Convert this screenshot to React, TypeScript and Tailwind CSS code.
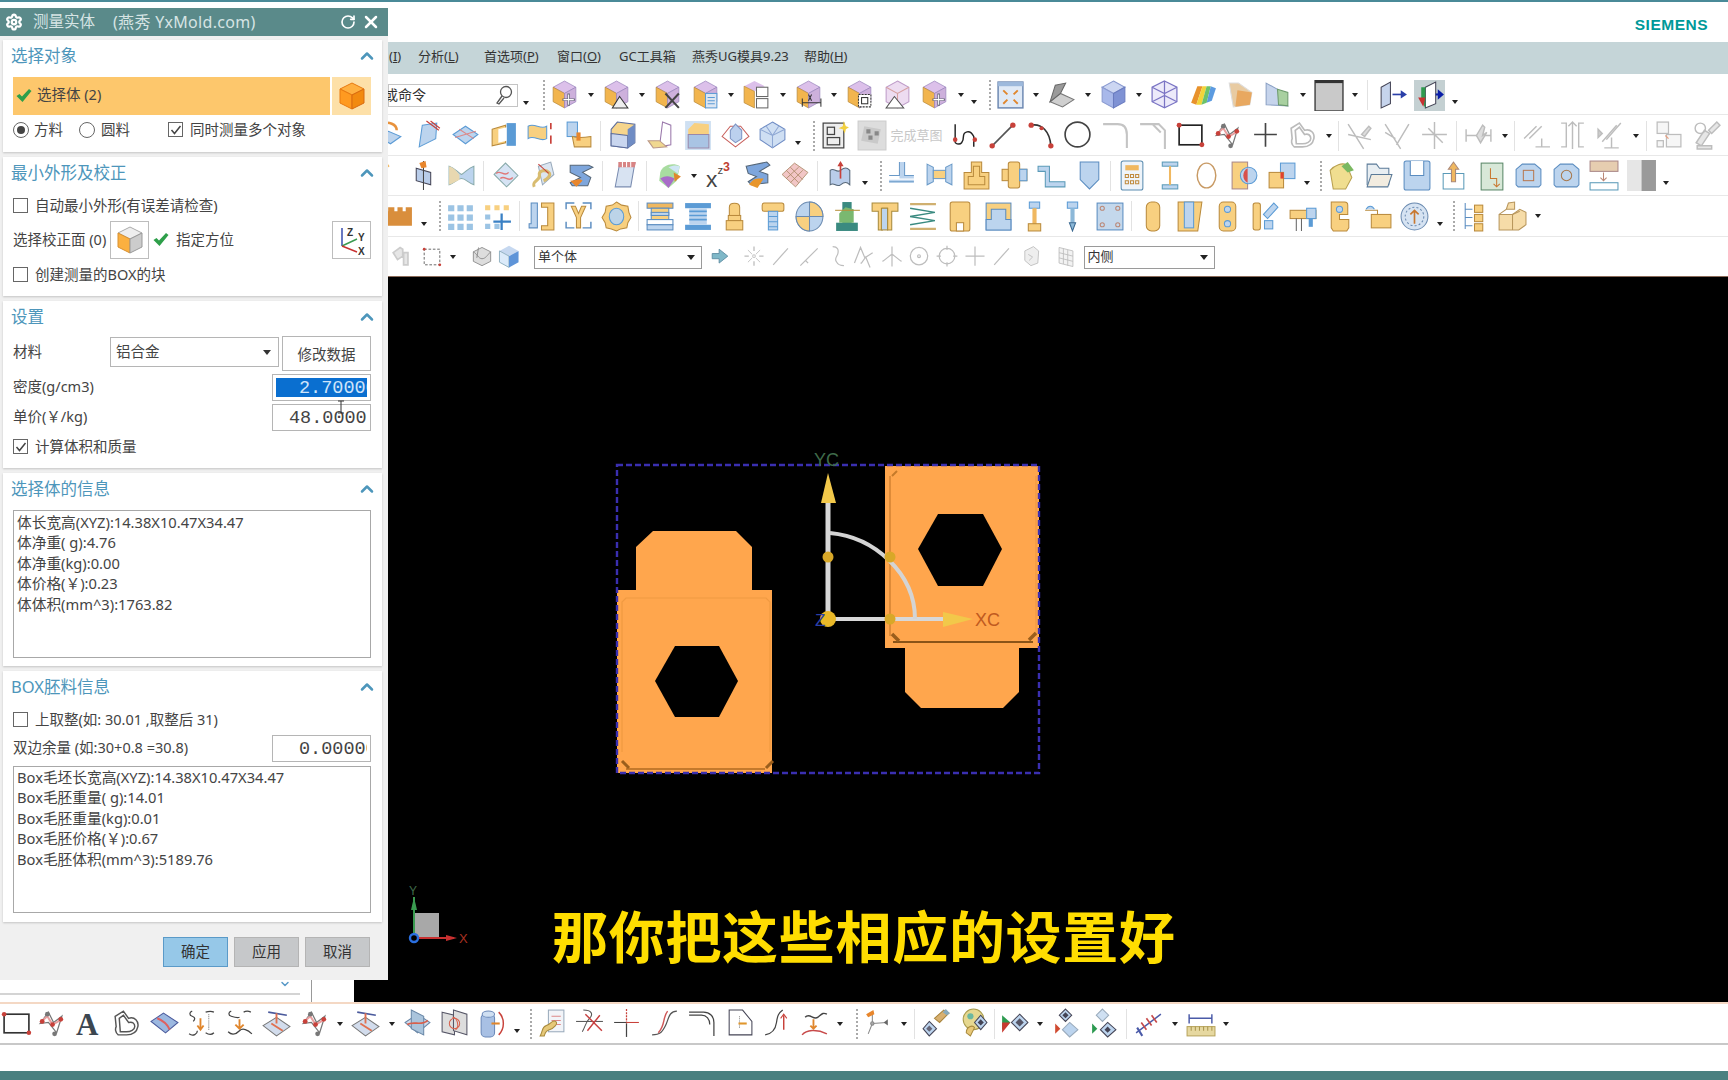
import React from 'react';
import { ChevronDown, ChevronUp, RotateCw, Settings, X } from 'lucide-react';

const FONT = "font-['Noto_Sans','Noto_Sans_CJK_SC',sans-serif]";

const B = '#5b9bd5';
const LB = '#bcd4ee';
const O = '#f0b860';
const LO = '#f8d080';
const G = '#bdbdbd';
const R = '#c8413a';

// faceted cube used by the first toolbar group
const PCube = ({ children }: { children?: React.ReactNode }) => (
  <g>
    <polygon points="14,1 25,7 14,13 3,7" fill="#dcc0ea" stroke="#9a86bc" strokeWidth=".7" />
    <polygon points="3,7 14,13 14,27 3,21" fill="#f2b54e" stroke="#b98a3c" strokeWidth=".7" />
    <polygon points="14,13 25,7 25,21 14,27" fill="#cdb0dc" stroke="#9a86bc" strokeWidth=".7" />
    {children}
  </g>
);

const Mold = ({ children }: { children: React.ReactNode }) => (
  <g stroke="#6a9ac8" strokeWidth="1">{children}</g>
);

const icons: Record<string, React.ReactNode> = {
  cmove: <PCube><path d="M18 13v12M12 19h12" stroke="#667" strokeWidth="2.4" /><path d="M18 14v10M13 19h10" stroke="#fff" strokeWidth="1" /></PCube>,
  ctri: <PCube><polygon points="17,16 25,27 10,27" fill="#eee" stroke="#333" /></PCube>,
  cx: <PCube><path d="M12 13l13 14M25 13L12 27" stroke="#444" strokeWidth="2" /></PCube>,
  cdoc: <PCube><rect x="14" y="13" width="11" height="14" fill="#dde6f2" stroke={B} /><path d="M16 17h7M16 20h7M16 23h7" stroke={B} /></PCube>,
  csplit: <g><polygon points="12,1 22,6 12,11 2,6" fill="#dcc0ea" /><polygon points="2,6 12,11 12,27 2,22" fill="#f2b54e" stroke="#b98a3c" strokeWidth=".7" /><rect x="14" y="7" width="11" height="9" fill="#fff" stroke="#666" /><rect x="14" y="18" width="11" height="9" fill="#fff" stroke="#666" /></g>,
  cdim: <PCube><path d="M8 22h18M8 18v8M26 18v8" stroke="#333" /><path d="M17 14l-3 6M14 14l3 6" stroke="#333" /></PCube>,
  cframe: <PCube><rect x="13" y="14" width="12" height="12" fill="#fff" stroke="#333" strokeDasharray="2 1" /><rect x="16" y="17" width="6" height="6" fill="none" stroke="#333" /></PCube>,
  cghost: <g opacity=".85"><polygon points="14,1 25,7 25,21 14,27 3,21 3,7" fill="#ead6ef" stroke="#b48cc0" /><path d="M14 13v14M3 7l11 6 11-6" stroke="#d09090" fill="none" /><polygon points="11,16 20,27 3,27" fill="#fff" stroke="#333" /></g>,
  fit: <g><rect x="2" y="2" width="24" height="25" fill="#dfe9f6" stroke="#6a86b0" strokeWidth="1.4" /><rect x="2" y="2" width="24" height="4" fill="#9db9dc" /><path d="M7 10l4 4M21 10l-4 4M7 23l4-4M21 23l-4-4" stroke="#e0862c" strokeWidth="1.8" /></g>,
  scan: <g><polygon points="3,21 15,26 26,19 13,13" fill="#cfcfcf" stroke="#777" /><polygon points="3,21 8,5 18,3 13,13" fill="#9a9a9a" stroke="#666" /></g>,
  blue: <g><polygon points="14,1 25,7 14,13 3,7" fill="#ccd6f2" stroke="#8a9ad0" /><polygon points="3,7 14,13 14,27 3,21" fill="#a8b8ea" stroke="#8a9ad0" /><polygon points="14,13 25,7 25,21 14,27" fill="#7f92d4" stroke="#6a7cc0" /></g>,
  wire: <g fill="none" stroke="#7a74c4" strokeWidth="1.2"><polygon points="14,1 26,7 26,21 14,27 2,21 2,7" fill="#eceafa" /><path d="M2 7l12 6 12-6M14 13v14M14 1v14M2 21l12-6 12 6" /></g>,
  rainbow: <g><polygon points="3,22 9,6 14,6 8,24" fill="#e8922c" /><polygon points="8,24 14,6 18,6 13,24" fill="#f2d43a" /><polygon points="13,24 18,6 22,6 18,22" fill="#6cc26a" /><polygon points="18,22 22,6 27,8 23,20" fill="#5c9be0" /></g>,
  ofold: <g><polygon points="4,3 13,3 26,12 24,24 8,26" fill="#e8cba2" stroke="#ddd" /><polygon points="12,10 26,12 24,24 10,26" fill="#e8a860" /></g>,
  bgbox: <g><polygon points="3,3 14,9 24,25 3,24" fill="#c6d4ec" stroke="#8aa0c4" /><polygon points="14,9 24,12 24,25 15,24" fill="#a8d0a0" stroke="#6c9a6c" /></g>,
  gray: <g><rect x="1" y="0" width="27" height="30" fill="#c9c9c9" stroke="#444" strokeWidth="1.4" /><rect x="1" y="0" width="27" height="3" fill="#333" /></g>,
  pane: <g><polygon points="3,7 12,2 12,23 3,27" fill="#c6d4ec" stroke="#445" /><path d="M14 14h10" stroke="#2a3fa8" strokeWidth="1.6" /><polygon points="22,10 28,14 22,18" fill="#2a3fa8" /></g>,
  paneh: <g><rect x="-2" y="-1" width="32" height="32" fill="#c4d0d2" /><polygon points="10,7 20,2 20,23 10,27" fill="#fff" stroke="#445" /><polygon points="6,7 10,7 10,27 6,20" fill="#2f9a4e" /><polygon points="3,17 10,17 8,26" fill="#c83030" /><path d="M20 14h5" stroke="#0a1fa8" strokeWidth="2" /><polygon points="22,9 28,14 22,19" fill="#0a1fa8" /></g>,

  twist: <g><polygon points="2,16 12,11 24,16 14,23" fill={LB} stroke={B} /><path d="M6 4c6-3 14 0 14 6" stroke="#e8923c" strokeWidth="2.4" fill="none" /></g>,
  sflag: <g><polygon points="8,5 22,3 21,18 5,26" fill={LB} stroke={B} /><path d="M12 1l12 9M16 1l9 7" stroke={R} strokeWidth="1.2" /></g>,
  disc: <g><polygon points="2,14 14,6 26,14 14,23" fill={LB} stroke={B} /><path d="M4 17l20-6M8 9l14 9" stroke="#d88" /></g>,
  ublock: <g><polygon points="3,9 16,5 16,22 3,25" fill={LO} stroke="#b98a3c" /><rect x="17" y="3" width="9" height="22" fill={B} /><polygon points="9,9 17,7 17,20 9,22" fill="#fff" /></g>,
  wave: <g><path d="M2 6c6-4 12 4 18 0v12c-6 4-12-4-18 0z" fill={LO} stroke={B} /><path d="M24 3v6M24 15v8" stroke={R} strokeWidth="1.6" /></g>,
  two: <g><rect x="3" y="2" width="10" height="14" fill={LB} stroke={B} /><path d="M8 16c6 2 18 0 18 0v10H10z" fill={LO} stroke="#b98a3c" /><rect x="12" y="12" width="4" height="8" fill="#e8862c" /></g>,
  boxo: <g><polygon points="3,9 9,2 26,4 26,22 19,27 3,25" fill="#f6d58c" stroke="#5b6c9c" /><polygon points="3,13 19,15 19,27 3,25" fill="#c9d6ef" stroke="#5b6c9c" /><polygon points="19,9 26,4 26,22 19,27" fill="#6f8cc4" /></g>,
  bend: <g><polygon points="16,2 24,5 24,24 13,26" fill="#fff" stroke="#97a" /><polygon points="2,20 13,20 20,26 7,27" fill="#f0d890" stroke="#b98" /></g>,
  shade: <g><rect x="2" y="1" width="25" height="28" fill="#cfe0f2" /><polygon points="5,9 11,3 25,4 25,14 5,14" fill={LO} /><polygon points="5,14 25,14 25,27 5,27" fill="#a9c4e4" stroke="#98a" /></g>,
  pyr: <g fill="none" stroke="#c8605c"><polygon points="1,16 9,6 19,6 27,16 14,26" /><polygon points="9,10 14,4 20,10 20,18 14,22 9,18" fill="#bcd0ee" stroke="#7d95c4" /></g>,
  gem: <g><polygon points="14,2 26,9 26,19 14,27 2,19 2,9" fill="#cfdff3" stroke="#6f8cc4" /><path d="M2 9l12 6 12-6M14 15v12M8 6l6 9 6-9" stroke="#8fa8d4" fill="none" /></g>,
  sknew: <g fill="#eee" stroke="#444" strokeWidth="1.2"><rect x="3" y="3" width="20" height="24" /><rect x="7" y="7" width="7" height="7" /><rect x="7" y="17" width="12" height="7" /><polygon points="23,1 25,6 28,7 25,9 24,13 22,9 18,8 22,6" fill="#f2d040" stroke="none" /></g>,
  flag: <g><rect x="1" y="1" width="27" height="28" fill="#ddd" stroke="#ccc" /><path d="M7 6l16 3-3 14-16-3z" fill="#c9c9c9" /><path d="M9 9h4v4H9zM17 11h4v4h-4zM11 15h4v4h-4z" fill="#888" /></g>,
  crv: <g fill="none"><path d="M4 4v18M4 22c6 4 8-2 8-6s6-8 10 0v10" stroke="#222" strokeWidth="1.4" /><circle cx="4" cy="19" r="2.2" fill={R} /><circle cx="23" cy="19" r="2.2" fill={R} /></g>,
  line: <g><path d="M4 25L24 5" stroke="#555" strokeWidth="1.6" /><circle cx="4" cy="25" r="2.6" fill={R} /><circle cx="24" cy="5" r="2.6" fill={R} /></g>,
  arc: <g><path d="M5 5c10-2 18 6 19 20" stroke="#333" strokeWidth="1.6" fill="none" /><circle cx="5" cy="5" r="2.6" fill={R} /><circle cx="24" cy="25" r="2.6" fill={R} /><circle cx="15" cy="8" r="2" fill={R} /></g>,
  circle: <circle cx="14" cy="14" r="12" fill="none" stroke="#444" strokeWidth="1.6" />,
  fillet: <path d="M2 4h14c6 0 9 4 9 10v13" fill="none" stroke="#c4c4c4" strokeWidth="2" />,
  chamfer: <path d="M2 4h18l6 6v18M14 4l8 8" fill="none" stroke="#c4c4c4" strokeWidth="2" />,
  rect: <g><rect x="3" y="5" width="22" height="19" fill="none" stroke="#222" strokeWidth="1.6" /><circle cx="3" cy="5" r="2.4" fill={R} /><circle cx="25" cy="24" r="2.4" fill={R} /></g>,
  poly: <g><path d="M3 15l8-11 5 10 8-6-5 16-8-10z" fill="none" stroke="#777" strokeWidth="1.2" /><path d="M3 14l7-6 5 8 9-5" fill="none" stroke="#e8a0a0" strokeWidth="2" /><circle cx="10" cy="6" r="2.3" fill="#777" /><circle cx="5" cy="13" r="2.3" fill={R} /><circle cx="15" cy="16" r="2.3" fill={R} /><circle cx="23" cy="11" r="2.3" fill={R} /><circle cx="17" cy="25" r="2.3" fill="#777" /></g>,
  plus: <path d="M14 3v23M3 14h22" stroke="#444" strokeWidth="1.6" />,
  heart: <g fill="#fff" stroke="#bbb" strokeWidth="1.6"><path d="M3 8l8-5 5 7c6-2 10 3 9 8s-5 8-11 8H6c-3-2-3-6-2-8z" /><path d="M7 10l4-3 5 7c4-1 6 1 6 4s-4 5-8 5H8z" /></g>,
  heartc: <g fill="#fff" stroke="#555" strokeWidth="1.4"><path d="M3 8l8-5 5 7c6-2 10 3 9 8s-5 8-11 8H6c-3-2-3-6-2-8z" /><path d="M7 10l4-3 5 7c4-1 6 1 6 4s-4 5-8 5H8z" /></g>,
  trim: <g stroke={G} strokeWidth="1.4" fill="none"><path d="M3 4l15 24M3 14l22 5" /><path d="M16 14l7-8 2 2-6 8z" fill="#ddd" /></g>,
  trim2: <g stroke={G} strokeWidth="1.4" fill="none"><path d="M3 4l15 24M26 4L14 24M3 12l10 6" /></g>,
  trim3: <g stroke={G} strokeWidth="1.4" fill="none"><path d="M14 2v26M2 14h24M8 8l14 14" /></g>,
  gdim: <g stroke={G} strokeWidth="1.4" fill="none"><path d="M2 9v12M26 9v12M2 15h24" /><path d="M12 15l6-10 2 2-2 8 4-3-6 10z" fill="#ddd" /></g>,
  par: <g stroke={G} strokeWidth="1.4"><path d="M3 18L15 6M8 18L20 6M14 26h14M20 26v-8" /></g>,
  perp: <g stroke={G} strokeWidth="1.4" fill="none"><path d="M3 3h5v23H3M25 3h-5v23h5M14 2v26M10 6l4-4 4 4" /></g>,
  sym: <g stroke={G} strokeWidth="1.4" fill="none"><path d="M10 19L24 3M6 21L20 5M8 27h14M15 27V17" /><polygon points="2,9 6,13 2,17" fill="#ccc" /></g>,
  grid: <g stroke={G} strokeWidth="1.2" fill="#f6f6f6"><rect x="3" y="2" width="11" height="11" /><rect x="12" y="14" width="14" height="12" /><rect x="3" y="20" width="6" height="6" /><path d="M11 15l3 3" stroke="#e8a080" /></g>,
  gears: <g stroke={G} strokeWidth="1.4" fill="#e6e6e6"><path d="M4 22l8-12 5 3-8 12z" /><circle cx="8" cy="8" r="5" fill="none" /><path d="M16 10l8-8 3 3-8 8zM5 25h14v3H5z" /></g>,

  partial: <g><polygon points="3,10 14,2 17,6 6,14" fill={O} /><polygon points="4,18 14,16 12,26 4,24" fill={B} /></g>,
  twist2: <g><polygon points="6,8 20,12 20,24 6,20" fill="#b9cdea" stroke="#445" /><path d="M13 1v28" stroke="#444" /><polygon points="9,3 15,1 16,7 11,8" fill="#e8862c" /></g>,
  bow: <g><path d="M2 6c6 2 8 6 12 8 4-2 6-6 12-8v18c-6-2-8-6-12-6-4 0-6 4-12 6z" fill={LB} stroke="#8aa" /><path d="M2 6c6 2 8 6 10 8v5c-2 1-6 3-10 5z" fill="#e8d8b0" /></g>,
  wavy: <g fill="none" stroke="#8aa" strokeWidth="1"><path d="M3 14L14 3l12 12-11 11z" fill="#d6e3f4" /><path d="M5 13c4-4 8 4 12-1M9 18c4-4 8 4 12-1" stroke="#e07878" strokeWidth="1.4" /></g>,
  ysnake: <g><polygon points="10,6 22,2 25,14 14,24" fill="#dce6f2" stroke="#9ab" /><path d="M6 26c-3-6 6-6 5-11s6-6 9-3-2 7-5 8" fill="none" stroke="#d8bc70" strokeWidth="3" /><path d="M10 4l10 9" stroke={R} /></g>,
  sarrow: <g><path d="M4 5h18l4 2-10 5 8 5-3 8H6l-2-3 10-5-10-5z" fill="#7ea6dc" stroke="#567" /><path d="M4 20c6 0 8-3 12 0l-6 6z" fill="#e8862c" /></g>,
  ribbon: <g><polygon points="9,5 24,3 20,26 5,26" fill="#d8e3f2" stroke="#7a8cb0" /><path d="M8 2h17l-1 5H8z" fill="#d88484" /><path d="M12 2v5M16 2v5M20 2v5" stroke="#fff" /></g>,
  shell: <g><path d="M6 12c2-7 12-10 19-6l-3 14-8 7-9-7z" fill="#a8dca0" /><path d="M6 18c6-4 10-2 14 0l-6 9z" fill="#a86cc8" /><path d="M14 7c4-2 8-2 11-1l-2 7z" fill="#cfe6f4" /><polygon points="19,12 26,16 20,21" fill="#e0862c" /></g>,
  xz3: <text x="1" y="26" fontFamily="Liberation Sans" fontSize="22" fill="#444">x<tspan fontSize="11" dy="-12" fill="#444">z</tspan><tspan fontSize="12" dy="-3" fill="#c04030" fontWeight="bold">3</tspan></text>,
  sorange: <g><path d="M3 6l20-4 3 3-10 6 8 3v8l-16 2-3-3 8-5-8-3z" fill="#7ea6dc" stroke="#567" /><path d="M6 24c4-7 8-6 14-6l-6 9z" fill="#e8962c" /></g>,
  mesh: <g stroke="#a86" strokeWidth=".8"><polygon points="2,14 14,3 27,12 15,26" fill="#f2c6c6" /><path d="M6 10l12 12M10 7l12 12M6 18l12-11M10 22l12-12" /></g>,
  upflag: <g><path d="M4 10c4-3 6 3 10 0s6-3 9 0v14c-3-3-5-3-9 0s-6-3-10 0z" fill="#b9cdea" stroke="#567" /><path d="M14 18V3" stroke={R} strokeWidth="1.6" /><polygon points="11,6 14,1 17,6" fill={R} /></g>,
  tee: <Mold><path d="M12 2h5v13h9v3H12zM2 19h24v3H2z" fill={LB} stroke="none" /><path d="M12 2v13H2M17 2v13h9M2 21h24" fill="none" /></Mold>,
  hbar: <Mold><polygon points="2,4 8,7 8,21 2,24" fill={LB} /><rect x="8" y="10" width="12" height="8" fill={LO} /><polygon points="26,4 20,7 20,21 26,24" fill={LB} /></Mold>,
  ubrk: <path d="M9 2h10v10h7v16H2V12h7zM6 16h5V6h6v10h5v8H6z" fill={LO} stroke="#b98a3c" />,
  cross: <g stroke="#b98a3c"><rect x="2" y="9" width="24" height="11" fill={LO} /><rect x="8" y="2" width="11" height="25" rx="2" fill={LO} /><path d="M19 9h7v11h-7z" fill={LB} stroke={B} /></g>,
  zig: <path d="M1 6h11v15h15v5H8V11H1z" fill={LB} stroke="#5a9ab8" />,
  drop: <polygon points="5,2 23,2 23,19 14,28 5,19" fill={LB} stroke="#5a8cc0" />,
  calc: <g><rect x="4" y="1" width="21" height="28" rx="2" fill="#eef4fa" stroke="#5a8cb0" /><rect x="8" y="5" width="13" height="5" fill={O} /><path d="M8 14h3v3H8zM13 14h3v3h-3zM18 14h3v3h-3zM8 20h3v3H8zM13 20h3v3h-3zM18 20h3v3h-3z" fill="none" stroke="#c08a3c" /></g>,
  ibeam: <g fill={LB} stroke="#5a9ab8"><rect x="7" y="2" width="15" height="4" /><rect x="7" y="24" width="15" height="4" /><rect x="13.5" y="6" width="2" height="18" fill={O} stroke="none" /></g>,
  ring: <ellipse cx="14" cy="15" rx="9" ry="12" fill="#fff" stroke="#c89a64" strokeWidth="1.4" />,
  halfc: <g><rect x="2" y="2" width="15" height="26" fill={LO} stroke="#a88" /><circle cx="18" cy="15" r="8" fill={LB} stroke={B} /><path d="M17 8a8 8 0 0 0 0 14z" fill="#d8504c" /></g>,
  sq2: <g><rect x="13" y="3" width="14" height="15" fill={LB} stroke={B} /><rect x="2" y="12" width="14" height="15" fill={LO} stroke="#b98a3c" /><rect x="13" y="12" width="3" height="6" fill="#e04030" /></g>,
  openf: <g><path d="M3 10c4-5 12-8 16-5l5 12-6 11H6z" fill="#f0de90" stroke="#b8a050" /><path d="M14 6l6-4 6 8-6 2z" fill="#7ab860" /></g>,
  folder: <g><path d="M3 8V4h9l3 4h9v16H3z" fill="#e8eef2" stroke="#5a7a98" /><path d="M3 26l4-12h20l-4 12z" fill="#f2ece0" stroke="#5a7a98" /></g>,
  save: <g><rect x="2" y="1" width="25" height="28" rx="2" fill={LB} stroke="#5a8cc0" /><path d="M8 1v14h13V1" fill="#fff" stroke="#5a8cc0" /></g>,
  upf: <g fill="#fff" stroke="#5a9ab8"><path d="M4 13h20v15H4z" /><path d="M14 2l-5 7h3v12h4V9h3z" fill={O} stroke="#a87" /></g>,
  gbox: <g><rect x="4" y="3" width="21" height="26" fill="#d8e8d8" stroke="#5a8868" /><path d="M13 8v10h6v8M16 23l3 3 3-3" fill="none" stroke="#c87830" /></g>,
  cam1: <g><path d="M2 9l6-5h12l6 5v15l-2 2H4l-2-2z" fill={LB} stroke="#5a8cc0" /><rect x="9" y="10" width="10" height="10" fill="none" stroke="#b87850" /></g>,
  cam2: <g><path d="M2 9l6-5h12l6 5v15l-2 2H4l-2-2z" fill={LB} stroke="#5a8cc0" /><circle cx="14" cy="15" r="5" fill="none" stroke="#a8784c" /></g>,
  slot: <g><rect x="1" y="1" width="27" height="10" fill="#e6cdb0" stroke="#a88" /><rect x="1" y="22" width="27" height="7" fill="#fff" stroke="#5a9ab8" /><path d="M14 12v8M11 17l3 3 3-3" stroke="#b87" fill="none" /></g>,
  grayb: <g><rect x="0" y="0" width="14" height="30" fill="#e6e6e6" /><rect x="14" y="0" width="14" height="30" fill="#9a9a9a" /></g>,

  wall: <path d="M0 10h4V6h6v4h3V6h5v4h3V6h6v18H0z" fill="#d98e3c" />,
  dots: <path d="M2 4h6v6H2zM11 4h6v6h-6zM20 4h6v6h-6z M2 13h6v6H2zM11 13h6v6h-6zM20 13h6v6h-6zM2 22h6v6H2zM11 22h6v6h-6zM20 22h6v6h-6z" fill="#9cc4e4" />,
  dotsm: <g><path d="M2 4h5v5H2zM11 4h5v5h-5zM20 4h5v5h-5z" fill={LO} /><path d="M2 13h5v5H2zM2 22h5v5H2zM11 22h5v5h-5z" fill="#9cc4e4" /><path d="M18 12v16M10 20h17" stroke="#3a80c4" strokeWidth="2.2" /></g>,
  bracket: <g><path d="M4 2h6v24H2v-4h2z" fill={LB} stroke="#5a8cc0" /><path d="M14 2h12v26H14v-4h6V6h-6z" fill={LO} stroke="#b98a3c" /></g>,
  ybr: <g><path d="M2 8V2h8M18 2h8v6M2 20v6h8M18 26h8v-6" fill="none" stroke="#5a8cc0" strokeWidth="1.4" /><path d="M7 5h4l3 7 3-7h4l-5 11v10h-4V16z" fill={LO} stroke="#b98a3c" /></g>,
  flower: <g><path d="M14 1l5 3 6 1 1 6 2 5-3 5-1 5-6 1-4 2-5-2-5-1-1-5-3-5 3-5 1-6 6-1z" fill={LO} stroke="#b98a3c" /><ellipse cx="14" cy="15" rx="7" ry="8" fill="#bcd4e8" stroke={B} /></g>,
  mold: <g stroke="#5a8cc0"><rect x="2" y="2" width="25" height="5" fill={O} /><rect x="6" y="7" width="17" height="11" fill={LO} /><rect x="6" y="11" width="17" height="3" fill={LB} /><rect x="2" y="18" width="25" height="5" fill="#fff" /><rect x="2" y="23" width="25" height="5" fill={LB} /></g>,
  coil: <g><rect x="2" y="2" width="25" height="5" fill={B} /><rect x="2" y="23" width="25" height="5" fill={B} /><path d="M6 7h17v16H6z" fill={LB} /><path d="M6 10h17M6 14h17M6 18h17" stroke={B} strokeWidth="1.6" /></g>,
  pin1: <g fill={LO} stroke="#b98a3c"><path d="M9 14V6c0-5 10-5 10 0v8z" /><rect x="8" y="14" width="12" height="5" /><rect x="6" y="19" width="16" height="9" /></g>,
  bolt: <g><rect x="4" y="2" width="21" height="8" rx="2" fill={LO} stroke="#b98a3c" /><rect x="10" y="10" width="9" height="18" fill={LB} stroke={B} /><path d="M10 15h9M10 20h9M10 25h9" stroke={B} /></g>,
  pie: <g stroke="#6a8ab0"><ellipse cx="14" cy="15" rx="13" ry="14" fill={LB} /><path d="M14 1v14h13c0-8-6-14-13-14z" fill={LO} /><path d="M14 29V15H1c0 8 6 14 13 14z" fill={LO} /></g>,
  gpost: <g><rect x="9" y="1" width="9" height="24" fill="#3a8a80" /><rect x="3" y="21" width="21" height="8" fill="#3a8a80" /><polygon points="6,12 12,6 20,8 20,21 6,21" fill="#7ab870" /><path d="M2 9h24" stroke="#b8903c" /></g>,
  ttop: <g fill={LO} stroke="#a88a3c"><path d="M2 2h25v8h-6v18h-4V7h-5v21H8V10H2z" /><rect x="11" y="7" width="6" height="21" fill={LB} /></g>,
  spring: <g fill="none"><path d="M2 3h25M2 27h25" stroke="#d0b070" strokeWidth="2" /><path d="M2 7l24 4-24 4 24 4-24 4" stroke="#3a8a80" strokeWidth="1.4" /></g>,
  yrect: <g><rect x="5" y="1" width="19" height="28" rx="2" fill={LO} stroke="#b98a3c" /><rect x="11" y="21" width="7" height="8" fill="#fff" stroke="#b98a3c" /></g>,
  brect: <g><rect x="3" y="2" width="24" height="26" fill={LO} stroke="#5a8cc0" /><path d="M3 28V18h5V8h14v10h5v10z" fill={LB} stroke="#5a8cc0" /></g>,
  thin: <g><rect x="9" y="1" width="10" height="6" fill={LB} stroke={B} /><rect x="12" y="7" width="4" height="17" fill={O} /><rect x="8" y="22" width="12" height="7" fill={LO} stroke="#b98a3c" /></g>,
  screw: <g><rect x="9" y="1" width="10" height="6" fill={LB} stroke={B} /><rect x="12" y="7" width="4" height="14" fill="#8cb8d8" /><polygon points="11,21 17,21 14,29" fill="#8cb8d8" stroke="#3a6890" /></g>,
  plate: <g><rect x="2" y="2" width="25" height="26" fill="#c4d8ec" stroke="#5a8cc0" /><circle cx="7" cy="7" r="2" fill="none" stroke="#b87" /><circle cx="22" cy="7" r="2" fill="none" stroke="#b87" /><circle cx="7" cy="23" r="2" fill="none" stroke="#b87" /><circle cx="22" cy="23" r="2" fill="none" stroke="#b87" /></g>,
  pill: <rect x="8" y="1" width="13" height="28" rx="5" fill={LO} stroke="#b98a3c" />,
  taper: <g><polygon points="3,1 26,1 22,29 3,29" fill={LO} stroke="#b98a3c" /><rect x="9" y="1" width="9" height="25" fill={LB} stroke={B} /></g>,
  holes: <g><rect x="6" y="1" width="16" height="28" rx="4" fill={LO} stroke="#b98a3c" /><circle cx="14" cy="8" r="3" fill={LB} stroke={B} /><circle cx="14" cy="22" r="3" fill={LB} stroke={B} /></g>,
  rod: <g><rect x="3" y="2" width="7" height="26" rx="2" fill={LO} stroke="#b98a3c" /><polygon points="13,13 23,2 27,6 17,17" fill={LB} stroke={B} /><rect x="14" y="19" width="8" height="8" fill={LB} stroke={B} /></g>,
  table: <g><rect x="2" y="9" width="25" height="8" fill={LO} stroke="#b98a3c" /><path d="M8 17v12M13 17v12" stroke="#666" /><rect x="18" y="7" width="9" height="10" fill={LB} stroke={B} /><rect x="20" y="17" width="4" height="8" fill={B} /></g>,
  yclip: <g><path d="M6 1h13c3 0 3 2 3 3v9h-8v5h9v8l-2 3H8l-2-3z" fill={LO} stroke="#b98a3c" /><circle cx="14" cy="8" r="3" fill={LB} stroke={B} /></g>,
  fold2: <g><rect x="8" y="13" width="19" height="13" fill={LO} stroke="#b98a3c" /><path d="M14 13V9H2" fill="none" stroke="#b98a3c" /><path d="M3 8c2-4 6-4 8 0" fill={LB} stroke={B} /></g>,
  dial: <g><circle cx="14" cy="15" r="13" fill="#d6e3f2" stroke="#6a8ab0" /><circle cx="14" cy="15" r="9" fill="none" stroke="#6a8ab0" strokeDasharray="2 2" /><path d="M14 22V10M10 13l4-4 4 4" fill="none" stroke="#c87830" strokeWidth="1.6" /></g>,
  tree: <g fill={LO} stroke="#b98a3c"><path d="M5 2v25M5 8h7M5 16h7M5 24h7" fill="none" stroke="#5a8cc0" /><rect x="14" y="4" width="8" height="7" /><rect x="14" y="13" width="8" height="7" /><rect x="14" y="22" width="8" height="7" /></g>,
  cubes: <g fill="#f6dca8" stroke="#b8965c"><path d="M2 13l7-5h8v-7l-6 1-2 6M2 13v15h13V13zM15 13l7-5 6 3v12l-7 5H15z" /><path d="M2 13h13M15 13l7-3" fill="none" /></g>,

  fade: <g stroke="#ccc" strokeWidth="2" fill="#e6e6e6"><path d="M5 10l8-6 3 2v8l-6 4zM17 10h5v14h-5z" /></g>,
  selbox: <g><rect x="5" y="6" width="18" height="18" fill="#fff" stroke="#555" strokeDasharray="3 2" /><circle cx="5" cy="6" r="1.6" fill={R} /><circle cx="23" cy="24" r="1.6" fill={R} /></g>,
  ghostb: <g stroke="#888"><polygon points="14,4 24,9 24,20 14,25 4,20 4,9" fill="#ddd" /><path d="M4 9c4 2 6 8 10 8s6-4 10-8M10 4l-2 12" fill="none" /></g>,
  bluec: <g><polygon points="14,2 25,8 14,14 3,8" fill="#c6d8f0" /><polygon points="3,8 14,14 14,27 3,21" fill="#dcebfa" stroke="#8ab" /><polygon points="14,14 25,8 25,21 14,27" fill="#5e94d8" /></g>,
  arrowr: <polygon points="5,11 13,11 13,6 23,14 13,22 13,17 5,17" fill="#7fb8c8" stroke="#5a8aa0" />,
  g1: <g stroke={G} fill="none"><path d="M14 3v5M14 20v5M3 14h5M20 14h5" strokeWidth="1.5" /><path d="M7 7l5 5M21 7l-5 5M7 21l5-5M21 21l-5-5" /><circle cx="14" cy="14" r="1.6" /></g>,
  g2: <path d="M5 24L22 5" stroke={G} strokeWidth="1.4" />,
  g3: <path d="M4 25L24 5M10 19l3 3" stroke={G} strokeWidth="1.4" />,
  g4: <path d="M9 3c6 0 7 4 6 8s-4 5-2 9 4 5 9 5" stroke={G} strokeWidth="1.4" fill="none" />,
  g5: <path d="M3 22l7-18 5 12 9-6M10 22h1l5-7 5 12" stroke={G} strokeWidth="1.4" fill="none" />,
  g6: <path d="M14 3v23M3 20c4-2 8-7 11-8 3 1 7 6 11 8" stroke={G} strokeWidth="1.4" fill="none" />,
  g7: <g stroke={G} fill="none" strokeWidth="1.4"><circle cx="14" cy="14" r="10" /><circle cx="14" cy="14" r="1.6" /></g>,
  g8: <g stroke={G} fill="none" strokeWidth="1.4"><circle cx="14" cy="14" r="9" /><path d="M14 2v5M14 21v5M2 14h5M21 14h5" /></g>,
  g9: <path d="M14 3v22M3 14h22" stroke={G} strokeWidth="1.4" />,
  g11: <g stroke={G} fill="#eee"><path d="M8 8l10-5 6 5-1 14-8 3-7-6z" /><path d="M12 12l5 3-4 4" fill="none" /></g>,
  gridg: <g stroke={G} fill="#f2f2f2"><polygon points="6,4 22,8 22,26 6,22" /><path d="M11 5v18M16 7v18M6 10l16 4M6 16l16 4" fill="none" /></g>,

  arect: <g><rect x="2" y="6" width="24" height="18" fill="none" stroke="#333" strokeWidth="1.6" /><circle cx="2" cy="6" r="2.2" fill={R} /><circle cx="26" cy="24" r="2.2" fill={R} /></g>,
  atext: <text x="1" y="26" fontFamily="Liberation Serif" fontSize="30" fontWeight="bold" fill="#3c4650">A</text>,
  sred: <g><polygon points="1,13 13,5 27,14 15,24" fill="#9cb8e0" stroke="#4a5a9c" /><path d="M7 10c5 2 10 6 12 11" stroke="#e06060" strokeWidth="2" fill="none" /></g>,
  cdown: <g fill="none" stroke="#444" strokeWidth="1.2"><path d="M5 3c-3 1-3 4 0 5s3 3 1 5M2 25c4 3 8 0 8-3M18 4c3-1 6-1 8 0M18 24c3 2 6 2 8 0" /><path d="M21 6v15" stroke="#888" strokeDasharray="1 1" /><path d="M13 10v11M10 17l3 4 3-4" stroke="#e0862c" strokeWidth="1.8" /></g>,
  cdown2: <g fill="none" stroke="#444" strokeWidth="1.2"><path d="M6 3c-3 1-3 4 0 5s6 2 8 1M3 23c4 4 8 2 11-1s8-1 12 3M18 4c2-1 5-1 7 0" /><path d="M14 11v9M10 16l4 4 4-4" stroke="#e0862c" strokeWidth="1.8" /></g>,
  prib: <g><path d="M6 4l18 3" stroke="#4a5a9c" strokeWidth="1.6" /><polygon points="1,17 14,9 27,18 14,27" fill="#d2dcec" stroke="#777" /><path d="M9 15l11 7M14 5v10" stroke="#e07050" strokeWidth="1.8" /></g>,
  cplane: <g><polygon points="2,14 14,6 26,14 14,24" fill="#d2dcec" stroke="#6a88a8" /><polygon points="8,2 20,8 20,26 8,20" fill="#aac4dc" stroke="#6a88a8" /><path d="M4 16c6-4 14 2 20-4" stroke="#d8604c" strokeWidth="1.6" fill="none" /></g>,
  tplanes: <g stroke="#556"><polygon points="2,4 14,7 14,26 2,23" fill="#ddd" /><polygon points="13,2 26,6 26,26 13,22" fill="#ddd" /><circle cx="14" cy="15" r="5" fill="none" stroke="#d8604c" /><path d="M12 9c5 0 7 10 3 12" fill="none" stroke="#d8604c" /></g>,
  cyl: <g><rect x="3" y="6" width="13" height="22" rx="4" fill="#a8c0e4" stroke="#6a88b8" /><ellipse cx="10" cy="6" rx="6" ry="3" fill="#cfdff2" stroke="#6a88b8" /><path d="M20 4c6 6 6 16 0 22" stroke={R} strokeWidth="1.4" fill="none" /><path d="M13 15h8" stroke="#e0862c" strokeWidth="2" /></g>,
  dsnake: <g><rect x="11" y="2" width="15" height="21" fill="#f2f4f8" stroke="#9ab" /><path d="M14 8h9M14 12h9M14 16h9" stroke="#d88" /><path d="M3 27c3-5 1-8 6-10s6-6 9-4-2 7-6 8-4 3-5 6z" fill="#e6c878" stroke="#a88a3c" /></g>,
  cvx: <g fill="none"><path d="M8 2c8 0 10 4 6 8s-4 8-7 13" stroke="#555" /><path d="M1 13h26" stroke="#555" /><path d="M10 6l16 16M24 7L12 22" stroke="#c84040" strokeWidth="1.4" /></g>,
  crossr: <g><path d="M14 1v14" stroke={R} strokeWidth="1.2" strokeDasharray="2 1" /><path d="M14 15v13" stroke="#444" strokeWidth="1.2" /><path d="M2 14h12" stroke="#444" /><path d="M14 14h12" stroke={R} /></g>,
  scurve: <g fill="none"><path d="M26 3c-8 0-8 8-11 14s-5 9-13 9" stroke="#555" strokeWidth="1.2" /><path d="M17 3c-5 6-2 14-9 21" stroke="#d05858" strokeWidth="1.4" /></g>,
  dfill: <path d="M2 4h14c6 0 10 4 10 10v13M2 7h12c5 0 8 4 8 9" fill="none" stroke="#444" strokeWidth="1.2" />,
  dfold: <g fill="#fff" stroke="#445"><polygon points="4,2 17,2 26,13 26,26 4,26" /><path d="M14 8v12" stroke="#888" strokeDasharray="1 1" /><path d="M13 15h8" stroke="#e0962c" strokeWidth="2" /></g>,
  arrsc: <g fill="none"><path d="M3 26c6-1 10-5 11-12s2-9 6-12" stroke="#444" strokeWidth="1.2" /><path d="M21 7v14" stroke={R} strokeWidth="1.4" /><path d="M18 10l3-4 3 4" stroke={R} /></g>,
  sndown: <g fill="none"><path d="M5 9c4-5 8 3 12 0s5-5 9-3" stroke="#444" strokeWidth="1.4" /><path d="M2 26c4-5 14-6 24-1" stroke="#c84a4a" strokeWidth="1.4" /><path d="M13 11v9M10 17l3 3 3-3" stroke="#e0862c" strokeWidth="1.8" /></g>,
  triad: <g fill="none" stroke="#888"><path d="M9 15V3M9 15l14-1M9 15l-4 10" /><circle cx="9" cy="15" r="1.6" fill="#aaa" /><path d="M3 6l7-4 1 4-6 3z" fill="#e8862c" stroke="none" /><path d="M20 14l4-3v6z" fill="#666" stroke="none" /></g>,
  dtube: <g><polygon points="7,13 14,20 7,27 1,20" fill={LB} stroke="#445" /><polygon points="7,17 10,20 7,23 4,20" fill="#667" /><path d="M12 10l9-8 5 3-9 9z" fill="#d8b070" stroke="#a8843c" /><polygon points="23,1 27,5 24,7 20,4" fill="#8ab" /></g>,
  dgear: <g><circle cx="14" cy="11" r="10" fill="#e6d890" stroke="#a89a4c" /><circle cx="11" cy="8" r="3" fill="#6cb8a0" /><path d="M7 24c0-6 6-8 8-5l-4 8z" fill="#e8c878" stroke="#a88a3c" /><polygon points="21,7 27,14 21,21 15,14" fill={LB} stroke="#445" /><polygon points="21,11 24,14 21,17 18,14" fill="#445" /></g>,
  tridiam: <g><polygon points="2,7 10,14 2,21" fill="#2c9a50" /><polygon points="2,14 10,14 2,24" fill="#c83a30" /><polygon points="19,6 27,14 19,22 11,14" fill={LB} stroke="#445" /><polygon points="19,10 23,14 19,18 15,14" fill="#556" /></g>,
  tri2: <g><polygon points="14,1 20,7 14,13 8,7" fill={LB} stroke="#445" /><polygon points="14,4 17,7 14,10 11,7" fill="#445" /><polygon points="4,15 9,20 4,25" fill="#d04a30" /><polygon points="18,14 26,21 18,28 11,21" fill={LB} stroke="#9ab" /></g>,
  tri3: <g><polygon points="13,1 19,7 13,13 7,7" fill="#cfe0f2" stroke="#9ab" /><polygon points="3,15 8,20 3,25" fill="#2c9a50" /><polygon points="18,14 26,21 18,28 11,21" fill={LB} stroke="#445" /><polygon points="18,18 21,21 18,24 15,21" fill="#445" /></g>,
  comb: <g stroke="#4a5aa8" fill="none"><path d="M2 24L26 6" strokeWidth="1.4" /><path d="M7 14l5 7M12 10l5 7M17 7l5 7" stroke="#c84a4a" strokeWidth="1.6" /><path d="M3 19l5 8" strokeWidth="2" /></g>,
  ruler: <g><path d="M3 6v9M25 6v9M3 10h22" stroke="#4a5aa8" strokeWidth="1.4" /><rect x="1" y="18" width="27" height="9" fill="#e6d8a0" stroke="#b8a45c" /><path d="M5 18v4M9 18v4M13 18v4M17 18v4M21 18v4M25 18v4" stroke="#a8944c" /></g>,
};

const Icon = ({ name, size = 31 }: { name: string; size?: number }) => (
  <svg width={size} height={size} viewBox="0 0 28 30">{icons[name]}</svg>
);

const Caret = () => <span className="block w-0 h-0 border-x-[3px] border-x-transparent border-t-[4px] border-t-[#222]" />;

const seps: Record<string, string> = {
  '3': 'w-[3px]',
  '5': 'w-[5px]',
  '6': 'w-[6px]',
  '7': 'w-[7px]',
  '8': 'w-[8px]',
  '10': 'w-[10px]',
  '12': 'w-[12px]',
};

// tokens: name = icon, name^ = icon + caret, . = low caret, |n = divider, #n = grip
const Tokens = ({ items }: { items: string }) => (
  <>
    {items.split(' ').map((t, i) => {
      if (t === '.') {
        return <span key={i} className="w-[12px] h-full flex items-end justify-center pb-[10px] shrink-0"><Caret /></span>;
      }
      if (t[0] === '|') {
        return (
          <span key={i} className={`${seps[t.slice(1)]} h-full flex items-center justify-center shrink-0`}>
            <span className="block w-px h-[30px] bg-[#e2e2e2]" />
          </span>
        );
      }
      if (t[0] === '#') {
        return (
          <span key={i} className={`${seps[t.slice(1)]} h-full flex items-center justify-end pr-[1px] shrink-0`}>
            <span className="block h-[30px] border-l-2 border-dotted border-l-[#aaa]" />
          </span>
        );
      }
      const caret = t.endsWith('^');
      const name = caret ? t.slice(0, -1) : t;
      return (
        <React.Fragment key={i}>
          <span className="w-[37.5px] h-full flex items-center justify-center shrink-0"><Icon name={name} /></span>
          {caret && <span className="w-[14px] h-full flex items-center justify-center shrink-0"><Caret /></span>}
        </React.Fragment>
      );
    })}
  </>
);

const Small = ({ names, cell }: { names: string; cell: string }) => (
  <>
    {names.split(' ').map((n, i) => (
      <span key={i} className={`${cell} h-full flex items-center justify-center shrink-0`}><Icon name={n} size={26} /></span>
    ))}
  </>
);

const Mnemonic = ({ text, k }: { text: string; k: string }) => (
  <span>{text}(<span className="underline">{k}</span>)</span>
);

const MiniSelect = ({ label, className }: { label: string; className: string }) => (
  <div className={`${className} h-[23px] shrink-0 border border-[#9a9a9a] bg-white flex items-center justify-between pl-[3px] pr-[6px] text-[13px] text-[#333]`}>
    <span>{label}</span>
    <span className="block w-0 h-0 border-x-[4px] border-x-transparent border-t-[5px] border-t-[#222]" />
  </div>
);

const Check = ({ className = '' }: { className?: string }) => (
  <svg className={className} width="16" height="15" viewBox="0 0 16 14">
    <path d="M0.5 7.5l3-2L6 8 13 .5l2.5 2L6.5 13.5z" fill="#2e9f4a" />
  </svg>
);

const Box = ({ checked }: { checked?: boolean }) => (
  <span className="w-[15px] h-[15px] border border-[#666] bg-white flex items-center justify-center shrink-0">
    {checked && (
      <svg width="12" height="12" viewBox="0 0 12 12"><path d="M1.5 6l3 3.5L10.5 2" fill="none" stroke="#444" strokeWidth="1.5" /></svg>
    )}
  </span>
);

const Radio = ({ on }: { on?: boolean }) => (
  <span className="w-[16px] h-[16px] rounded-full border border-[#666] bg-white flex items-center justify-center shrink-0">
    {on && <span className="w-[8px] h-[8px] rounded-full bg-[#444]" />}
  </span>
);

const Section = ({ title, className, children }: { title: string; className: string; children: React.ReactNode }) => (
  <section className={`${className} bg-white shadow-[0_1px_2px_rgba(0,0,0,0.18)] pl-[10px] pr-[11px] flex flex-col shrink-0`}>
    <div className="h-[32px] flex items-center justify-between shrink-0 -mr-[6px] -ml-[2px]">
      <span className="text-[16.5px] text-[#4d96bb]">{title}</span>
      <ChevronUp size={20} strokeWidth={3} className="text-[#4d96bb]" />
    </div>
    {children}
  </section>
);

const NumField = ({ value, pad, selected, children }: { value: string; pad: string; selected?: boolean; children?: React.ReactNode }) => (
  <div className="relative w-[99px] h-[27px] border border-[#b5b5b5] bg-white flex items-center p-[3px] shrink-0">
    <div className={`w-full h-full overflow-hidden whitespace-nowrap flex items-center pt-[3px] font-['Liberation_Mono',monospace] text-[18.5px] ${pad} ${selected ? 'bg-[#0a6fd0] text-[#cfe4fa]' : 'text-[#444]'}`}>
      {value}
    </div>
    {children}
  </div>
);

const InfoBox = ({ lines, className }: { lines: string[]; className: string }) => (
  <div className={`${className} border border-[#a8a8a8] bg-white pl-[3px] text-[14.7px] leading-[20.4px] text-[#444] shrink-0`}>
    {lines.map((l, i) => <div key={i} className="whitespace-nowrap">{l}</div>)}
  </div>
);

const ROW = 'flex items-center text-[14.5px] text-[#444] shrink-0 pb-[1px]';

const Dialog = () => (
  <aside className={`absolute left-0 top-[8px] w-[388px] h-[972px] bg-[#f0f0f0] flex flex-col ${FONT}`}>
    <header className="h-[28px] bg-[#5a8a8a] flex items-center pl-[5px] pr-[7px] text-[#d6e4e4] shrink-0">
      <Settings size={18} strokeWidth={3} className="text-white" />
      <span className="ml-[10px] text-[15.5px]">测量实体</span>
      <span className="ml-[18px] text-[16px] tracking-[0.3px]">(燕秀 YxMold.com)</span>
      <RotateCw size={16} strokeWidth={2.5} className="ml-auto text-white" />
      <X size={20} strokeWidth={3} className="ml-[5px] text-white" />
    </header>

    <div className="flex-1 flex flex-col pl-[3px] pr-[6px] pt-[4px] gap-[5px]">
      <Section title="选择对象" className="h-[112px]">
        <div className="mt-[5px] h-[38px] flex shrink-0">
          <div className="flex-1 bg-[#fdc76c] flex items-center pl-[3px] pb-[2px] text-[14.5px] text-[#444]">
            <Check />
            <span className="ml-[5px]">选择体 (2)</span>
          </div>
          <div className="ml-[2px] w-[39px] bg-[#fde0a8] flex items-center justify-center">
            <svg width="28" height="30" viewBox="0 0 28 30">
              <polygon points="14,2 26,8 14,14 2,8" fill="#ffb040" stroke="#e87a10" />
              <polygon points="2,8 14,14 14,28 2,22" fill="#ff9a20" stroke="#e87a10" />
              <polygon points="14,14 26,8 26,22 14,28" fill="#f28a10" stroke="#d86a10" />
            </svg>
          </div>
        </div>
        <div className={`h-[30px] ${ROW}`}>
          <Radio on />
          <span className="ml-[5px] w-[45px]">方料</span>
          <Radio />
          <span className="ml-[6px] w-[67px]">圆料</span>
          <Box checked />
          <span className="ml-[7px]">同时测量多个对象</span>
        </div>
      </Section>

      <Section title="最小外形及校正" className="h-[139px]">
        <div className={`mt-[5px] h-[24px] ${ROW}`}>
          <Box />
          <span className="ml-[7px]">自动最小外形(有误差请检查)</span>
        </div>
        <div className={`mt-[3px] h-[38px] ${ROW}`}>
          <span className="w-[97px] whitespace-nowrap">选择校正面 (0)</span>
          <div className="w-[39px] h-[38px] border border-[#bdbdbd] flex items-center justify-center">
            <svg width="28" height="30" viewBox="0 0 28 30">
              <polygon points="14,2 26,8 14,14 2,8" fill="#eee" stroke="#aaa" />
              <polygon points="2,8 14,14 14,28 2,22" fill="#fbb040" stroke="#d89030" />
              <polygon points="14,14 26,8 26,22 14,28" fill="#ccc" stroke="#999" />
            </svg>
          </div>
          <Check className="ml-[4px]" />
          <span className="ml-[7px]">指定方位</span>
          <div className="ml-auto w-[39px] h-[38px] border border-[#bdbdbd] flex items-center justify-center">
            <svg width="32" height="32" viewBox="0 0 32 32">
              <path d="M6 22V4" stroke="#2a3fa8" strokeWidth="1.4" />
              <path d="M6 22l15-7" stroke="#3a9a50" strokeWidth="1.4" />
              <path d="M6 22l15 6" stroke="#c83030" strokeWidth="1.4" />
              <text x="11" y="12" fontSize="10" fontWeight="bold" fill="#333" fontFamily="Liberation Sans">Z</text>
              <text x="22" y="17" fontSize="10" fontWeight="bold" fill="#333" fontFamily="Liberation Sans">Y</text>
              <text x="22" y="31" fontSize="10" fontWeight="bold" fill="#333" fontFamily="Liberation Sans">X</text>
            </svg>
          </div>
        </div>
        <div className={`mt-[3px] h-[26px] ${ROW}`}>
          <Box />
          <span className="ml-[7px]">创建测量的BOX的块</span>
        </div>
      </Section>

      <Section title="设置" className="h-[167px]">
        <div className="mt-[3px] h-[35px] flex text-[14.5px] text-[#444] shrink-0">
          <span className="w-[97px] h-[31px] flex items-center">材料</span>
          <div className="mt-[1px] w-[169px] h-[30px] border border-[#b5b5b5] flex items-center justify-between pl-[5px] pr-[7px]">
            <span>铝合金</span>
            <span className="block w-0 h-0 border-x-[4px] border-x-transparent border-t-[5px] border-t-[#333]" />
          </div>
          <div className="ml-[3px] flex-1 border border-[#b5b5b5] flex items-center justify-center pt-[2px]">修改数据</div>
        </div>
        <div className={`mt-[3px] h-[27px] justify-between ${ROW}`}>
          <span>密度(g/cm3)</span>
          <NumField value="2.70000000" pad="pl-[23px]" selected />
        </div>
        <div className={`mt-[3px] h-[27px] justify-between ${ROW}`}>
          <span>单价(￥/kg)</span>
          <NumField value="48.0000000" pad="pl-[13px]">
            <svg className="absolute left-[64px] -top-[5px]" width="8" height="14" viewBox="0 0 8 14">
              <path d="M1 1h6M4 1v12M1 13h6" stroke="#333" strokeWidth="1" fill="none" />
            </svg>
          </NumField>
        </div>
        <div className="h-[30px] pt-[1px] flex items-center text-[14.5px] text-[#444] shrink-0">
          <Box checked />
          <span className="ml-[7px]">计算体积和质量</span>
        </div>
      </Section>

      <Section title="选择体的信息" className="h-[193px]">
        <InfoBox
          className="mt-[5px] h-[148px] pt-[1px]"
          lines={['体长宽高(XYZ):14.38X10.47X34.47', '体净重( g):4.76', '体净重(kg):0.00', '体价格(￥):0.23', '体体积(mm^3):1763.82']}
        />
      </Section>

      <Section title="BOX胚料信息" className="h-[251px]">
        <div className={`mt-[5px] h-[24px] ${ROW}`}>
          <Box />
          <span className="ml-[7px]">上取整(如: 30.01 ,取整后 31)</span>
        </div>
        <div className={`mt-[3px] h-[27px] justify-between ${ROW}`}>
          <span>双边余量 (如:30+0.8 =30.8)</span>
          <NumField value="0.00000000" pad="pl-[23px]" />
        </div>
        <InfoBox
          className="mt-[4px] h-[147px]"
          lines={['Box毛坯长宽高(XYZ):14.38X10.47X34.47', 'Box毛胚重量( g):14.01', 'Box毛胚重量(kg):0.01', 'Box毛胚价格(￥):0.67', 'Box毛胚体积(mm^3):5189.76']}
        />
      </Section>

      <div className="mt-[10px] flex justify-end gap-[6px] pr-[12px] text-[14.5px] text-[#333]">
        <button className="w-[65px] h-[30px] bg-[#96c8e8] border border-[#5a9ac8]">确定</button>
        <button className="w-[65px] h-[30px] bg-[#c6c8ca] border border-[#b4b4b4]">应用</button>
        <button className="w-[65px] h-[30px] bg-[#c6c8ca] border border-[#b4b4b4]">取消</button>
      </div>
    </div>
  </aside>
);

const Toolbars = () => (
  <div className={`flex flex-col bg-white ${FONT}`}>
    <div className="h-[41px] pl-[388px] pt-[2px] flex items-center border-b border-[#e8e8e8]">
      <div className="w-[130px] h-[23px] border border-[#c4c4c4] flex items-center justify-between pr-[4px] text-[14px] text-[#333] shrink-0">
        <span className="-ml-[5px] pb-[2px]">或命令</span>
        <svg width="18" height="20" viewBox="0 0 18 20" fill="none" stroke="#555" strokeWidth="1.3"><circle cx="11" cy="7" r="5.5" /><path d="M7 11l-5 7 2 1 5-6" /></svg>
      </div>
      <div className="w-[16px] h-full flex items-end justify-center pb-[9px] shrink-0"><Caret /></div>
      <Tokens items="#12 cmove^ ctri^ cx cdoc^ csplit^ cdim^ cframe cghost cmove^ . #12 fit^ scan^ blue^ wire rainbow ofold bgbox^ gray^ |12 pane paneh ." />
    </div>
    <div className="h-[41px] pl-[372px] pt-[1px] flex items-center border-b border-[#e8e8e8]">
      <Tokens items="twist sflag disc ublock wave two |7 boxo bend shade pyr gem . #12 sknew flag" />
      <span className="w-[56px] text-[13px] text-[#c8c8c8] shrink-0">完成草图</span>
      <Tokens items="crv line arc circle fillet chamfer rect poly plus heart^ |5 trim trim2 trim3 |7 gdim^ |5 par perp sym^ |7 grid gears" />
    </div>
    <div className="h-[40px] pl-[368px] flex items-center border-b border-[#e8e8e8]">
      <Tokens items="partial twist2 bow |6 wavy ysnake sarrow |7 ribbon |6 shell^ xz3 sorange mesh |8 upflag . #12 tee hbar ubrk cross zig drop |5 calc ibeam ring halfc sq2 . #10 openf folder save upf gbox cam1 cam2 slot grayb ." />
    </div>
    <div className="h-[41px] pl-[380px] flex items-center border-b border-[#e8e8e8]">
      <Tokens items="wall . #12 dots dotsm |6 bracket ybr flower |6 mold coil pin1 bolt pie gpost ttop spring yrect brect thin screw plate |5 pill taper holes rod table yclip fold2 dial . #10 tree cubes^" />
    </div>
    <div className="h-[39px] pl-[383px] pt-[1px] flex items-center">
      <Small names="fade" cell="w-[35px]" />
      <Small names="selbox" cell="w-[28px]" />
      <span className="w-[14px] flex justify-center"><Caret /></span>
      <span className="w-[8px]" />
      <Small names="ghostb bluec" cell="w-[27px]" />
      <span className="w-[12px]" />
      <MiniSelect label="单个体" className="w-[168px]" />
      <Small names="arrowr" cell="w-[36px]" />
      <span className="w-[2px]" />
      <Small names="g1 g2 g3 g4 g5 g6 g7 g8 g9 g2 g11" cell="w-[27.6px]" />
      <span className="w-[8px]" />
      <Small names="gridg" cell="w-[28px]" />
      <span className="w-[4px]" />
      <MiniSelect label="内侧" className="w-[131px]" />
    </div>
  </div>
);

const Viewport = () => (
  <div className="relative h-[725px] bg-black flex shrink-0">
    <div className="w-[354px] bg-white flex flex-col justify-end shrink-0">
      <div className="w-[312px] h-[23px] border-r border-[#999] relative">
        <ChevronDown size={12} strokeWidth={3} className="absolute left-[279px] -top-[1px] text-[#5a9ac8]" />
        <div className="absolute left-0 top-[14px] w-[300px] h-[2px] bg-[#d4d4d4]" />
      </div>
    </div>
    <svg className="flex-1 h-full" viewBox="354 277 1374 725">
      {/* left body */}
      <polygon points="636,590 636,547 653,531 736,531 752,547 752,590" fill="#ffa64d" />
      <rect x="617" y="590" width="155" height="183" fill="#ffa64d" />
      <path d="M622 752V602l4-4h140l4 4v150" fill="none" stroke="#f09a42" strokeWidth="1.2" />
      <path d="M626 769h139" stroke="#b06a20" strokeWidth="1.6" />
      <path d="M622 761l7 7M766 768l7-7" stroke="#9a5e1c" strokeWidth="3" />
      <polygon points="655,681 675,646 719,646 738,681 719,717 675,717" fill="#000" />
      {/* right body */}
      <polygon points="905,648 905,692 921,708 1003,708 1019,692 1019,648" fill="#ffa64d" />
      <rect x="885" y="466" width="154" height="182" fill="#ffa64d" />
      <path d="M890 476v160" stroke="#d08030" strokeWidth="1.4" />
      <path d="M1036 476v160" stroke="#f09a42" strokeWidth="1.2" />
      <path d="M893 642h140" stroke="#8a5418" strokeWidth="2" />
      <path d="M892 634l7 7M1036 633l-7 7" stroke="#9a5e1c" strokeWidth="3.5" />
      <path d="M892 476l5-5" stroke="#c47a2a" strokeWidth="2" />
      <polygon points="918,549 938,514 983,514 1002,549 983,586 938,586" fill="#000" />
      {/* bounding box */}
      <rect x="617" y="465" width="422" height="308" fill="none" stroke="#3a2fb0" strokeWidth="2.4" strokeDasharray="6 3" />
      {/* wcs handle */}
      <path d="M828 619V500" stroke="#d8d8d8" strokeWidth="5" />
      <path d="M828 619h118" stroke="#d8d8d8" strokeWidth="4" />
      <path d="M830 533c44 4 85 40 85 86" fill="none" stroke="#d4d4d4" strokeWidth="4" />
      <polygon points="828,473 836,503 821,503" fill="#f2c84a" />
      <polygon points="973,619 943,612 943,627" fill="#f2c84a" />
      <circle cx="828" cy="619" r="8" fill="#e8b828" />
      <circle cx="828" cy="557" r="5.5" fill="#d8a828" />
      <circle cx="890" cy="557" r="5.5" fill="#d8a828" />
      <circle cx="890" cy="619" r="5.5" fill="#d8a828" />
      <text x="814" y="466" fontSize="18" fill="#3f6b4a" fontFamily="Liberation Sans">YC</text>
      <text x="975" y="626" fontSize="18" fill="#c05a20" fontFamily="Liberation Sans">XC</text>
      <text x="815" y="626" fontSize="17" fill="#2a3fa8" fontFamily="Liberation Sans">Z</text>
      {/* view triad */}
      <rect x="414" y="913" width="25" height="24" fill="#a8a8a8" />
      <path d="M414 937v-40" stroke="#3a9a50" strokeWidth="2" />
      <path d="M414 938h40" stroke="#c83030" strokeWidth="2" />
      <polygon points="414,897 411,910 417,910" fill="#3a9a50" />
      <polygon points="457,938 446,935 446,941" fill="#c83030" />
      <circle cx="414" cy="938" r="4" fill="#000" stroke="#2a6fe0" strokeWidth="2.4" />
      <text x="409" y="895" fontSize="12" fill="#3f6b4a" fontFamily="Liberation Sans">Y</text>
      <text x="459" y="943" fontSize="13" fill="#a83020" fontFamily="Liberation Sans">X</text>
    </svg>
    <div className="absolute left-[552px] top-[625px] text-[56px] leading-[64px] tracking-[0.7px] font-bold text-[#ffdd00] whitespace-nowrap font-['Noto_Sans_CJK_SC',sans-serif]">
      那你把这些相应的设置好
    </div>
  </div>
);

export default function App() {
  return (
    <div className={`relative w-[1728px] h-[1080px] overflow-hidden bg-white flex flex-col ${FONT}`}>
      <div className="h-[2px] bg-[#4a8a98] shrink-0" />
      <div className="h-[40px] flex items-center justify-end pr-[20px] pt-[6px] shrink-0">
        <span className="text-[15.5px] font-bold tracking-[0.5px] text-[#009999] font-['Liberation_Sans',sans-serif]">SIEMENS</span>
      </div>
      <nav className="h-[32px] bg-[#c5d5d8] flex items-center pl-[389px] pb-[2px] text-[13px] text-[#333] shrink-0">
        <span className="w-[29px]">(<span className="underline">I</span>)</span>
        <span className="w-[66px]"><Mnemonic text="分析" k="L" /></span>
        <span className="w-[73px]"><Mnemonic text="首选项" k="P" /></span>
        <span className="w-[62px]"><Mnemonic text="窗口" k="O" /></span>
        <span className="w-[73px]">GC工具箱</span>
        <span className="w-[112px]">燕秀UG模具9.23</span>
        <span><Mnemonic text="帮助" k="H" /></span>
      </nav>
      <Toolbars />
      <div className="h-px bg-[#8a6a58] shrink-0" />
      <Viewport />
      <div className="h-[2px] bg-[#f4d8c4] shrink-0" />
      <div className="h-[39px] flex items-center bg-white shrink-0">
        <span className="w-[33px] h-full flex items-center justify-center shrink-0"><Icon name="arect" /></span>
        <Tokens items="poly atext heartc sred cdown cdown2 prib poly^ prib^ cplane tplanes cyl . #10 dsnake cvx crossr scurve dfill dfold arrsc sndown^ #12 triad^ |7 dtube dgear |3 tridiam^ tri2 tri3 |8 comb^ ruler^" />
      </div>
      <div className="h-[2px] bg-[#c8c8c8] shrink-0" />
      <div className="h-[26px] bg-white shrink-0" />
      <div className="h-[9px] bg-[#4a8080] shrink-0" />
      <Dialog />
    </div>
  );
}
